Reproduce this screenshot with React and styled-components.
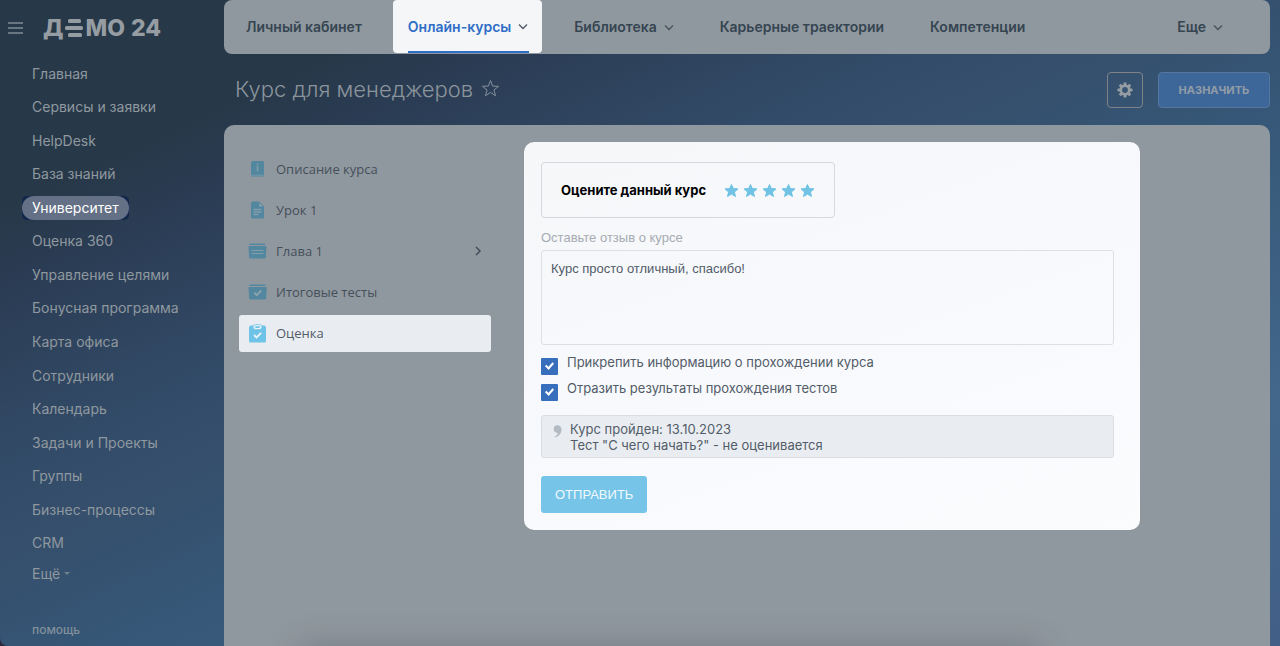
import React from "react";
import styled, { createGlobalStyle } from "styled-components";

const inter = `Inter, "Liberation Sans", sans-serif`;
const open = `"Open Sans", "Noto Sans", sans-serif`;
const arial = `"Liberation Sans", Arial, sans-serif`;

const Global = createGlobalStyle`
  *, *::before, *::after { box-sizing: border-box; }
  body { margin: 0; background: #2b2a3d; font-family: ${inter}; }
  ul { list-style: none; margin: 0; padding: 0; }
  a { color: inherit; text-decoration: none; }
  button { font: inherit; cursor: pointer; }
`;

const Page = styled.div`
  display: grid;
  grid-template-columns: 224px minmax(0, 1fr);
  min-height: 100vh;
  border-bottom-left-radius: 8px;
  background: linear-gradient(155deg, #273849 0%, #273849 17%, #2b3d55 24%, #2f445e 31%, #324b68 38%, #354f6c 45%, #365777 56%, #42678a 80%, #425f88 100%);
`;

const Sidebar = styled.aside`
  display: flex;
  flex-direction: column;
  color: #8f989f;
`;

const Brand = styled.header`
  display: flex;
  align-items: center;
  gap: 20px;
  height: 57px;
  padding: 0 8px 2px;
`;

const MenuButton = styled.button`
  display: flex;
  padding: 0;
  border: 0;
  background: none;
  color: #7f8b95;
`;

const Logo = styled.a`
  display: flex;
  align-items: center;
  gap: 2px;
  color: #969da2;
  font: 800 23px/32px ${inter};
`;

const LogoBars = styled.svg`
  display: block;
`;

const LogoNumber = styled.span`
  margin-left: 4px;
`;

const SideList = styled.ul`
  flex: 1;
  display: flex;
  flex-direction: column;
`;

const SideItem = styled.li`
  flex: 1;
  display: flex;
  align-items: center;
  padding-left: 22px;
`;

const SideMark = styled.span`
  border-radius: 5px;
  background: ${(p) => (p.$active ? "#11264b" : "none")};
`;

const SideLink = styled.a`
  display: block;
  padding: 0 10px;
  border-radius: 12px;
  font-size: 14px;
  line-height: 24px;
  white-space: nowrap;
  background: ${(p) => (p.$active ? "#647086" : "none")};
  color: ${(p) => (p.$active ? "#fff" : "inherit")};
`;

const SideFooter = styled.footer`
  display: flex;
  flex-direction: column;
  justify-content: space-between;
  align-items: flex-start;
  height: 86px;
  padding: 0 32px 8px;
`;

const MoreButton = styled.button`
  display: flex;
  align-items: center;
  gap: 4px;
  padding: 0;
  border: 0;
  background: none;
  color: inherit;
  font-size: 14px;
  line-height: 28px;
`;

const HelpLink = styled.a`
  font-size: 12px;
  line-height: 16px;
  font-weight: 500;
  color: #81909c;
`;

const Main = styled.main`
  display: flex;
  flex-direction: column;
  padding-right: 10px;
`;

const TopNav = styled.nav`
  display: flex;
  gap: 17px;
  height: 54px;
  padding: 0 33px 0 7px;
  border-radius: 8px;
  background: #90989f;
`;

const Tab = styled.a`
  position: relative;
  display: flex;
  align-items: center;
  gap: 7px;
  height: ${(p) => (p.$active ? "53px" : "54px")};
  padding: 0 14px 1px 15px;
  border-radius: 4px;
  background: ${(p) => (p.$active ? "#f5f6f8" : "none")};
  color: ${(p) => (p.$active ? "#2f6ec6" : "#354551")};
  font-size: 14px;
  font-weight: 600;
  white-space: nowrap;
  margin-left: ${(p) => (p.$last ? "auto" : "0")};

  &::after {
    content: "";
    display: ${(p) => (p.$active ? "block" : "none")};
    position: absolute;
    left: 15px;
    right: 13px;
    bottom: 0;
    height: 2px;
    background: #2f6ec6;
  }
`;

const TitleBar = styled.header`
  display: flex;
  align-items: center;
  gap: 15px;
  height: 71px;
  padding-left: 11px;
`;

const TitleGroup = styled.div`
  flex: 1;
  display: flex;
  align-items: center;
  gap: 8px;
  padding-bottom: 2px;
`;

const Title = styled.h1`
  margin: 0;
  font-size: 22px;
  line-height: 32px;
  font-weight: 300;
  color: #8b949c;
`;

const StarButton = styled.button`
  display: flex;
  padding: 0;
  border: 0;
  background: none;
  color: #84909b;
`;

const GearButton = styled.button`
  display: flex;
  align-items: center;
  justify-content: center;
  width: 36px;
  height: 36px;
  padding: 0;
  border: 1px solid #7f8387;
  border-radius: 4px;
  background: none;
  color: #969da3;
`;

const AssignButton = styled.button`
  min-width: 112px;
  height: 36px;
  padding: 0 16px;
  border: 1px solid #55779f;
  border-radius: 4px;
  background: #3e6799;
  color: #929ca7;
  font-size: 11px;
  font-weight: 700;
`;

const Panel = styled.section`
  flex: 1;
  display: grid;
  grid-template-columns: 252px minmax(0, 1fr);
  align-items: start;
  gap: 33px;
  padding: 17px 130px 20px 15px;
  border-radius: 10px 10px 0 0;
  background: #90989f;
`;

const DockShadow = styled.div`
  position: fixed;
  left: 300px;
  right: 240px;
  bottom: -60px;
  height: 60px;
  box-shadow: 0 0 32px rgba(50, 58, 64, 0.28);
  pointer-events: none;
`;

const CourseList = styled.ul`
  display: grid;
  gap: 4px;
  padding-top: 9px;
`;

const CourseLink = styled.a`
  display: flex;
  align-items: center;
  gap: 9px;
  height: 37px;
  padding: 0 9px 1px;
  border-radius: 3px;
  background: ${(p) => (p.$active ? "#e9edf1" : "none")};
  color: ${(p) => (p.$active ? "#515b6a" : "#454f5b")};
  font-family: ${open};
  font-size: 13px;

  > span { flex: 1; }
`;

const Card = styled.form`
  display: flex;
  flex-direction: column;
  align-items: flex-start;
  padding: 20px 26px 17px 17px;
  border: 0;
  border-radius: 10px;
  background: linear-gradient(160deg, #f5f7f9, #f7f9fc 50%, #fafcfe);
`;

const Rating = styled.div`
  display: flex;
  align-items: center;
  gap: 17px;
  height: 56px;
  padding: 0 19px;
  border: 1px solid #d5d8dc;
  border-radius: 4px;
`;

const RatingTitle = styled.span`
  font-size: 13px;
  line-height: 20px;
  font-weight: 700;
  color: #000;
`;

const Stars = styled.div`
  display: flex;
  gap: 3px;
`;

const StarLabel = styled.label`
  position: relative;
  display: flex;
  color: #70c3e5;
  cursor: pointer;

  input {
    position: absolute;
    inset: 0;
    margin: 0;
    opacity: 0;
  }
`;

const ReviewLabel = styled.label`
  margin: 12px 0 4px;
  font: 13px/16px ${arial};
  color: #a6abb2;
`;

const Review = styled.textarea`
  width: 100%;
  height: 95px;
  padding: 10px 9px;
  border: 1px solid #dcdfe3;
  border-radius: 3px;
  background: none;
  color: #535c69;
  font: 13px/16px ${arial};
  resize: none;
`;

const Checks = styled.div`
  display: grid;
  gap: 6px;
  margin: 7px 0 17px;
`;

const CheckLabel = styled.label`
  display: flex;
  align-items: flex-start;
  gap: 9px;
  height: 20px;
  font-size: 13px;
  line-height: 20px;
  color: #535c69;
`;

const CheckBox = styled.input`
  appearance: none;
  position: relative;
  width: 17px;
  height: 17px;
  margin: 6px 0 0;
  border-radius: 1px;
  background: #b8c0cc;

  &:checked { background: #386fbd; }

  &:checked::after {
    content: "";
    position: absolute;
    left: 6px;
    top: 3px;
    width: 5px;
    height: 8px;
    border: solid #fff;
    border-width: 0 2px 2px 0;
    transform: rotate(42deg);
  }
`;

const Summary = styled.div`
  display: flex;
  align-items: flex-start;
  gap: 8px;
  width: 100%;
  padding: 5px 11px 4px;
  border: 1px solid #dadee1;
  border-radius: 3px;
  background: #e9edf1;
  color: #535c69;
  font-size: 13px;
  line-height: 16px;

  svg { margin-top: 4px; }
  p { margin: 0; }
`;

const Submit = styled.button`
  height: 37px;
  margin-top: 18px;
  padding: 0 14px;
  border: 0;
  border-radius: 3px;
  background: #76c5e8;
  color: #f0f9fd;
  font: 13px/16px ${arial};
`;

const Chevron = ({ active }) => (
  <svg width="10" height="8" viewBox="0 0 10 8" fill="none" stroke={active ? "#535c69" : "#46545f"} strokeWidth="1.4">
    <path d="M1 2.500l4 4 4-4" />
  </svg>
);

const dim = { fill: "#52879f", line: "#8fa4af" };
const bright = { fill: "#6fc3e6", line: "#e9f3f9" };

const icons = {
  info: (c) => (
    <>
      <path fill={c.fill} d="M4.500 1h9.500a2 2 0 0 1 2 2v13.500h-13v-13.500a2 2 0 0 1 1.500-2z" />
      <path stroke={c.line} strokeWidth="1" d="M3 15.200h13" opacity=".6" />
      <path stroke={c.line} strokeWidth="1.600" d="M9.500 6v5.200M9.500 3.400v1.500" opacity=".8" />
    </>
  ),
  page: (c) => (
    <>
      <path fill={c.fill} d="M4.500 .5h6.500l5 5v10.500a1.500 1.500 0 0 1-1.500 1.500h-10a1.500 1.500 0 0 1-1.500-1.500v-13.500a2 2 0 0 1 1.500-2z" />
      <path fill={c.line} d="M11.300 2v3.500h3.500z" />
      <path stroke={c.line} strokeWidth="1.300" d="M5.500 8.500h8M5.500 11h8M5.500 13.500h5" opacity=".8" />
    </>
  ),
  folder: (c) => (
    <>
      <path fill={c.fill} d="M1.500 1.500h15.500v1.500h-15.500zM.5 4h18l-.6 11a1.500 1.500 0 0 1-1.500 1.500h-13.800a1.500 1.500 0 0 1-1.500-1.500z" />
      <path stroke={c.line} strokeWidth="1.100" d="M3.500 8.500h12M3.500 11.500h12" opacity=".8" />
    </>
  ),
  tests: (c) => (
    <>
      <path fill={c.fill} d="M1.500 1.500h16v1.500h-16zM.5 4h18.300l-.6 11a1.500 1.500 0 0 1-1.500 1.500h-14a1.500 1.500 0 0 1-1.500-1.500z" />
      <path stroke={c.line} strokeWidth="1.800" fill="none" d="M6.200 9.700l2.500 2.500 4.500-4.700" />
    </>
  ),
  clipboard: (c) => (
    <>
      <path fill={c.fill} d="M3 1.500h13a2 2 0 0 1 2 2v13.500a1.500 1.500 0 0 1-1.500 1.500h-14a1.500 1.500 0 0 1-1.500-1.500v-13.500a2 2 0 0 1 2-2z" />
      <rect x="5" y=".6" width="9" height="5" rx="2.500" fill={c.line} stroke={c.fill} strokeWidth=".8" />
      <rect x="7" y="2.300" width="5" height="1.600" rx=".8" fill={c.fill} />
      <path stroke={c.line} strokeWidth="1.900" fill="none" d="M6 11l2.500 2.500 4.700-4.700" />
    </>
  ),
};

const CourseIcon = ({ name, active }) => (
  <svg width="19" height="19" viewBox="0 0 19 19" aria-hidden="true">
    {icons[name](active ? bright : dim)}
  </svg>
);

const sections = [
  "Главная", "Сервисы и заявки", "HelpDesk", "База знаний", "Университет",
  "Оценка 360", "Управление целями", "Бонусная программа", "Карта офиса",
  "Сотрудники", "Календарь", "Задачи и Проекты", "Группы", "Бизнес-процессы", "CRM",
];

const tabs = [
  { text: "Личный кабинет" },
  { text: "Онлайн-курсы", menu: true, active: true },
  { text: "Библиотека", menu: true },
  { text: "Карьерные траектории" },
  { text: "Компетенции" },
  { text: "Еще", menu: true, last: true },
];

const lessons = [
  { text: "Описание курса", icon: "info" },
  { text: "Урок 1", icon: "page" },
  { text: "Глава 1", icon: "folder", nested: true },
  { text: "Итоговые тесты", icon: "tests" },
  { text: "Оценка", icon: "clipboard", active: true },
];

export default function App() {
  return (
    <>
      <Global />
      <Page>
        <Sidebar>
          <Brand>
            <MenuButton type="button" aria-label="Меню">
              <svg width="15" height="14" viewBox="0 0 15 14" stroke="currentColor" strokeWidth="1.500">
                <path d="M0 2h15M0 7h15M0 12h15" />
              </svg>
            </MenuButton>
            <Logo href="#">
              <span>Д</span>
              <LogoBars width="18" height="20" viewBox="0 0 18 20" fill="currentColor" role="img" aria-label="Е">
                <rect x="3" y="1" width="13" height="4" rx="1.500" />
                <rect x="0" y="8" width="18" height="4" rx="1.500" />
                <rect x="3" y="15" width="14" height="4" rx="1.500" />
              </LogoBars>
              <span>МО</span>
              <LogoNumber>24</LogoNumber>
            </Logo>
          </Brand>
          <SideList>
            {sections.map((s) => (
              <SideItem key={s}>
                <SideMark $active={s === "Университет"}>
                  <SideLink href="#" $active={s === "Университет"}>{s}</SideLink>
                </SideMark>
              </SideItem>
            ))}
          </SideList>
          <SideFooter>
            <MoreButton type="button">
              Ещё
              <svg width="6" height="4" viewBox="0 0 6 4" fill="#71808e"><path d="M0 0h6l-3 3z" /></svg>
            </MoreButton>
            <HelpLink href="#">помощь</HelpLink>
          </SideFooter>
        </Sidebar>

        <Main>
          <TopNav>
            {tabs.map((t) => (
              <Tab key={t.text} href="#" $active={t.active} $last={t.last}>
                {t.text}
                {t.menu && <Chevron active={t.active} />}
              </Tab>
            ))}
          </TopNav>

          <TitleBar>
            <TitleGroup>
              <Title>Курс для менеджеров</Title>
              <StarButton type="button" aria-label="В избранное">
                <svg width="19" height="19" viewBox="0 0 19 19" fill="none" stroke="currentColor" strokeWidth="1">
                  <path d="M9.500 1.500l2.100 5.600 6 .2-4.700 3.700 1.700 5.800-5.100-3.400-5.100 3.400 1.700-5.800-4.700-3.700 6-.2z" />
                </svg>
              </StarButton>
            </TitleGroup>
            <GearButton type="button" aria-label="Настройки">
              <svg width="16" height="16" viewBox="0 0 16 16">
                <g fill="currentColor">
                  {[0, 45, 90, 135].map((a) => (
                    <rect key={a} x="6.500" y=".5" width="3" height="15" rx=".8" transform={`rotate(${a} 8 8)`} />
                  ))}
                  <circle cx="8" cy="8" r="5.500" />
                </g>
                <circle cx="8" cy="8" r="2.900" fill="#385573" />
              </svg>
            </GearButton>
            <AssignButton type="button">НАЗНАЧИТЬ</AssignButton>
          </TitleBar>

          <Panel>
            <CourseList>
              {lessons.map((l) => (
                <li key={l.text}>
                  <CourseLink href="#" $active={l.active}>
                    <CourseIcon name={l.icon} active={l.active} />
                    <span>{l.text}</span>
                    {l.nested && (
                      <svg width="8" height="10" viewBox="0 0 8 10" fill="none" stroke="#414d59" strokeWidth="1.500">
                        <path d="M2 1l4 4-4 4" />
                      </svg>
                    )}
                  </CourseLink>
                </li>
              ))}
            </CourseList>

            <Card onSubmit={(e) => e.preventDefault()}>
              <Rating role="radiogroup" aria-labelledby="rating-title">
                <RatingTitle id="rating-title">Оцените данный курс</RatingTitle>
                <Stars>
                  {[1, 2, 3, 4, 5].map((n) => (
                    <StarLabel key={n}>
                      <input type="radio" name="rating" value={n} defaultChecked={n === 5} aria-label={String(n)} />
                      <svg width="16" height="16" viewBox="0 0 16 16" fill="currentColor" stroke="currentColor" strokeLinejoin="round">
                        <path d="M8.500 2.500l1.800 4 4.700.400-3.600 3.100 1.100 4.500-4-2.400-4 2.400 1.100-4.500-3.600-3.100 4.700-.400z" />
                      </svg>
                    </StarLabel>
                  ))}
                </Stars>
              </Rating>
              <ReviewLabel htmlFor="review">Оставьте отзыв о курсе</ReviewLabel>
              <Review id="review" defaultValue="Курс просто отличный, спасибо!" />
              <Checks>
                <CheckLabel>
                  <CheckBox type="checkbox" defaultChecked />
                  Прикрепить информацию о прохождении курса
                </CheckLabel>
                <CheckLabel>
                  <CheckBox type="checkbox" defaultChecked />
                  Отразить результаты прохождения тестов
                </CheckLabel>
              </Checks>
              <Summary>
                <svg width="9" height="13" viewBox="0 0 9 13" fill="#b4bac2">
                  <path d="M4.300.3a3.900 3.900 0 0 1 4.200 4.200c0 4-2.400 6.900-6.500 8l-.4-.9c2-1 3-2.100 3.200-3.700a3.800 3.800 0 1 1-.5-7.600z" />
                </svg>
                <div>
                  <p>Курс пройден: 13.10.2023</p>
                  <p>Тест "С чего начать?" - не оценивается</p>
                </div>
              </Summary>
              <Submit type="submit">ОТПРАВИТЬ</Submit>
            </Card>
          </Panel>
        </Main>
      </Page>
      <DockShadow />
    </>
  );
}
